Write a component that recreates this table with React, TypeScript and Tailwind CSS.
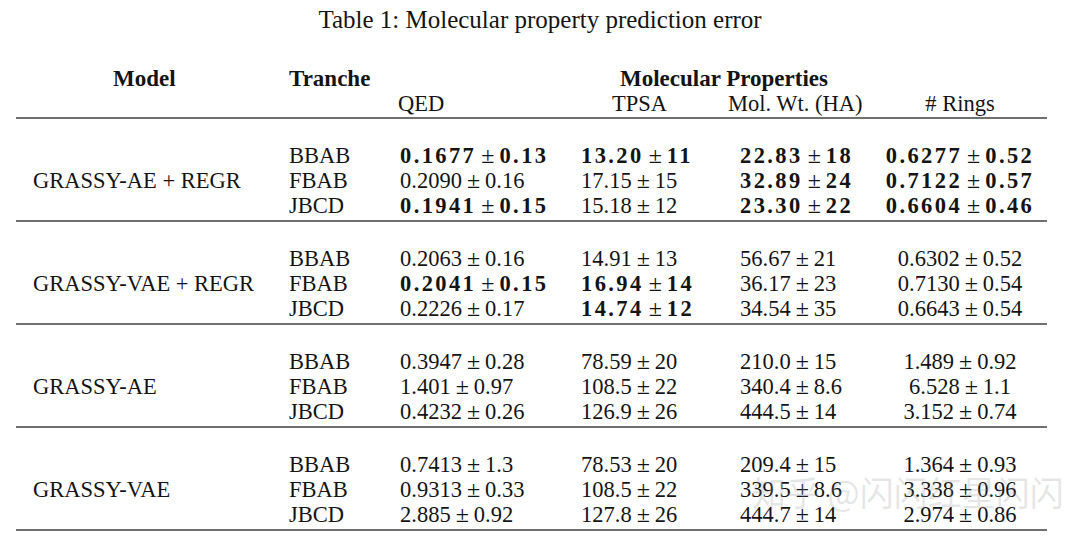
import React from "react";

type Cell = { v: string; b?: boolean };
type Group = { model: string; rows: { tranche: string; cells: Cell[] }[] };

const groups: Group[] = [
  {
    model: "GRASSY-AE + REGR",
    rows: [
      { tranche: "BBAB", cells: [{ v: "0.1677 ± 0.13", b: true }, { v: "13.20 ± 11", b: true }, { v: "22.83 ± 18", b: true }, { v: "0.6277 ± 0.52", b: true }] },
      { tranche: "FBAB", cells: [{ v: "0.2090 ± 0.16" }, { v: "17.15 ± 15" }, { v: "32.89 ± 24", b: true }, { v: "0.7122 ± 0.57", b: true }] },
      { tranche: "JBCD", cells: [{ v: "0.1941 ± 0.15", b: true }, { v: "15.18 ± 12" }, { v: "23.30 ± 22", b: true }, { v: "0.6604 ± 0.46", b: true }] },
    ],
  },
  {
    model: "GRASSY-VAE + REGR",
    rows: [
      { tranche: "BBAB", cells: [{ v: "0.2063 ± 0.16" }, { v: "14.91 ± 13" }, { v: "56.67 ± 21" }, { v: "0.6302 ± 0.52" }] },
      { tranche: "FBAB", cells: [{ v: "0.2041 ± 0.15", b: true }, { v: "16.94 ± 14", b: true }, { v: "36.17 ± 23" }, { v: "0.7130 ± 0.54" }] },
      { tranche: "JBCD", cells: [{ v: "0.2226 ± 0.17" }, { v: "14.74 ± 12", b: true }, { v: "34.54 ± 35" }, { v: "0.6643 ± 0.54" }] },
    ],
  },
  {
    model: "GRASSY-AE",
    rows: [
      { tranche: "BBAB", cells: [{ v: "0.3947 ± 0.28" }, { v: "78.59 ± 20" }, { v: "210.0 ± 15" }, { v: "1.489 ± 0.92" }] },
      { tranche: "FBAB", cells: [{ v: "1.401 ± 0.97" }, { v: "108.5 ± 22" }, { v: "340.4 ± 8.6" }, { v: "6.528 ± 1.1" }] },
      { tranche: "JBCD", cells: [{ v: "0.4232 ± 0.26" }, { v: "126.9 ± 26" }, { v: "444.5 ± 14" }, { v: "3.152 ± 0.74" }] },
    ],
  },
  {
    model: "GRASSY-VAE",
    rows: [
      { tranche: "BBAB", cells: [{ v: "0.7413 ± 1.3" }, { v: "78.53 ± 20" }, { v: "209.4 ± 15" }, { v: "1.364 ± 0.93" }] },
      { tranche: "FBAB", cells: [{ v: "0.9313 ± 0.33" }, { v: "108.5 ± 22" }, { v: "339.5 ± 8.6" }, { v: "3.338 ± 0.96" }] },
      { tranche: "JBCD", cells: [{ v: "2.885 ± 0.92" }, { v: "127.8 ± 26" }, { v: "444.7 ± 14" }, { v: "2.974 ± 0.86" }] },
    ],
  },
];

const cols = "grid grid-cols-[273px_111px_183px_157px_140px_160px]";
const align = ["text-left", "text-left", "text-left", "text-center"];

// value like "0.1677 ± 0.13", bold ones are wider like the math bold font
function Value({ cell }: { cell: Cell }) {
  const [a, b] = cell.v.split(" ± ");
  return (
    <span className={cell.b ? "font-bold tracking-[2.4px]" : ""}>
      {a}
      <span className="mx-[5px] text-[24px] font-normal tracking-normal">±</span>
      {b}
    </span>
  );
}

export default function App() {
  return (
    <div className="relative w-[1080px] h-[544px] bg-white text-[#141414] font-['Liberation_Serif',serif] text-[22.5px] overflow-hidden">
      <div className="pt-[5px] text-center leading-[30px] text-[25px]">
        Table 1: Molecular property prediction error
      </div>

      <div className="ml-[16px] w-[1031px] mt-[31px]">
        <div className={`${cols} leading-[25px] font-bold text-[23px]`}>
          <div className="pl-[97px]">Model</div>
          <div>Tranche</div>
          <div className="col-span-4 text-center pl-[8px]">Molecular Properties</div>
        </div>
        <div className={`${cols} leading-[26px]`}>
          <div />
          <div />
          <div className="-ml-[2px]">QED</div>
          <div className="pl-[29px]">TPSA</div>
          <div className="-ml-[12px] whitespace-nowrap">Mol. Wt. (HA)</div>
          <div className="text-center">#&nbsp;Rings</div>
        </div>
        <div className="h-[2px] bg-[#707070]" />

        {groups.map((g) => (
          <div key={g.model}>
            <div className={`${cols} grid-rows-[25px_25px_25px] leading-[25px] pt-[24px] pb-[2px]`}>
              <div className="row-span-3 self-center pl-[17px] whitespace-nowrap">{g.model}</div>
              {g.rows.map((r) => (
                <React.Fragment key={r.tranche}>
                  <div>{r.tranche}</div>
                  {r.cells.map((c, i) => (
                    <div key={i} className={`${align[i]} whitespace-nowrap ${i === 1 ? "-ml-[2px]" : ""}`}>
                      <Value cell={c} />
                    </div>
                  ))}
                </React.Fragment>
              ))}
            </div>
            <div className="h-[2px] bg-[#707070]" />
          </div>
        ))}
      </div>

      {/* site watermark in the corner */}
      <div className="absolute left-[752px] top-[472px] text-[34px] leading-[40px] text-[#9a9a9a]/25 font-['Noto_Sans_CJK_SC',sans-serif] whitespace-nowrap pointer-events-none">
        知乎 @闪闪红星闪闪
      </div>
    </div>
  );
}
